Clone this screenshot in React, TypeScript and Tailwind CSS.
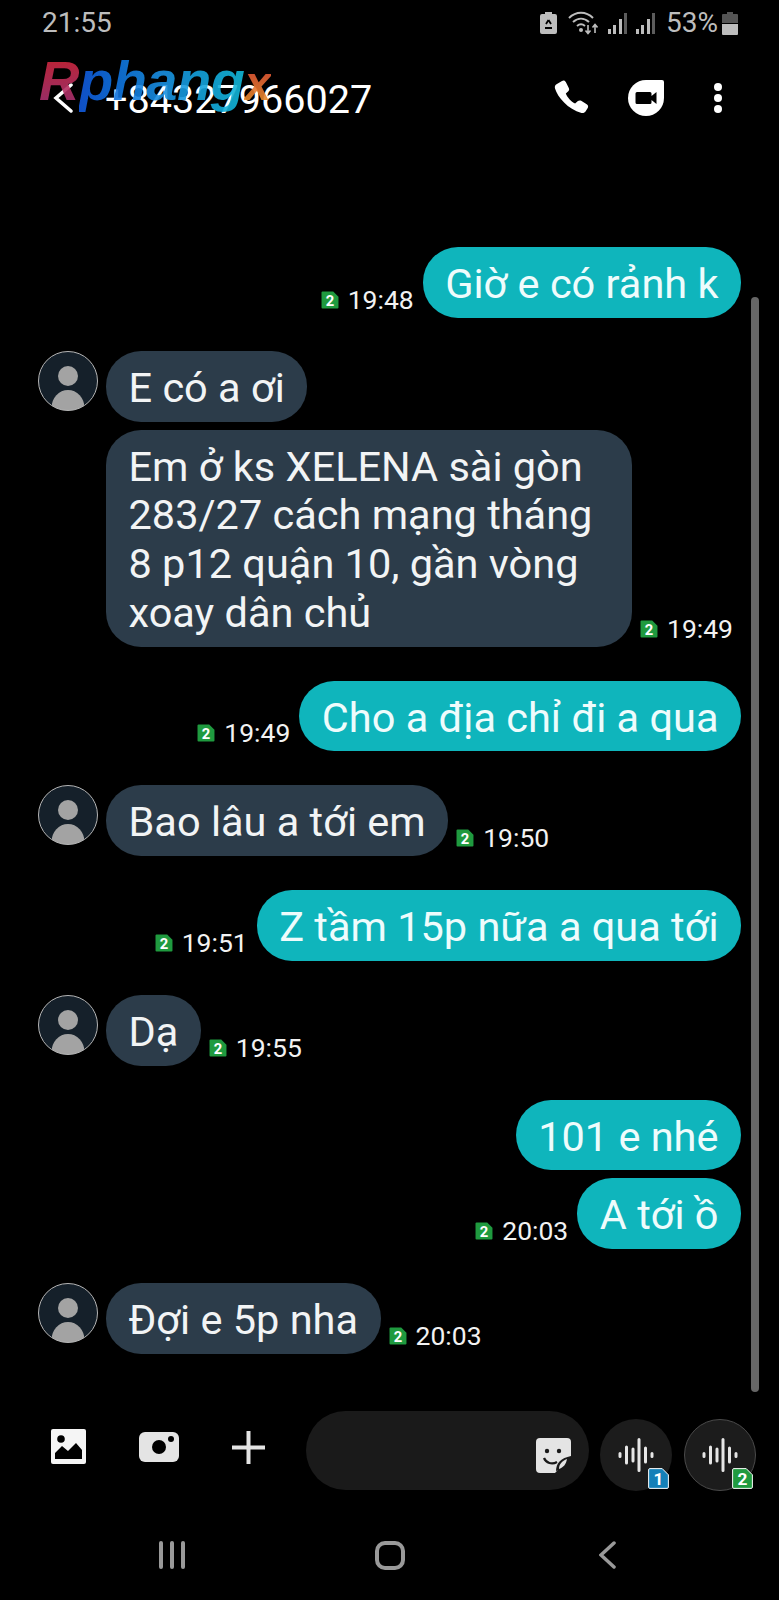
import React from "react";

const SimBadge = ({ n, size = 18, border = false }: { n: 1 | 2; size?: number; border?: boolean }) => {
  const fill = n === 1 ? "#1480b8" : "#1f9a3f";
  return (
    <svg width={size} height={size} viewBox="0.5 0.5 17 17" className="shrink-0">
      <path
        d="M2 1h10l5 5v10a1 1 0 0 1-1 1H2a1 1 0 0 1-1-1V2a1 1 0 0 1 1-1z"
        fill={fill}
        stroke={border ? "#fff" : "none"}
        strokeWidth={border ? 0.8 : 0}
      />
      <text x="9" y="14.500" textAnchor="middle" fontSize="14" fontWeight="700" fill="#fff" fontFamily="Roboto, sans-serif">
        {n}
      </text>
    </svg>
  );
};

const Time = ({ t }: { t: string }) => (
  <div className="flex items-center gap-[9px] mb-[3px] shrink-0 text-[26.5px] leading-[30px] text-[#f2f2f2]">
    <SimBadge n={2} />
    <span>{t}</span>
  </div>
);

const Bubble = ({ text, sent }: { text: string; sent?: boolean }) => (
  <div
    className={`rounded-[35px] px-[22.5px] pt-[13px] pb-[9px] text-[41.5px] leading-[48.75px] ${
      sent ? "bg-[#0fb5bc] text-[#eefcfc]" : "bg-[#2c3c4a] text-[#f2f4f5]"
    }`}
  >
    {text}
  </div>
);

const Sent = ({ text, t, gap = "mt-[34px]" }: { text: string; t?: string; gap?: string }) => (
  <div className={`flex justify-end items-end gap-[9px] pr-[38px] ${gap}`}>
    {t && <Time t={t} />}
    <Bubble text={text} sent />
  </div>
);

const Avatar = () => (
  <svg width="60" height="60" viewBox="0 0 60 60" className="shrink-0">
    <defs>
      <clipPath id="avatarClip">
        <circle cx="30" cy="30" r="29.5" />
      </clipPath>
    </defs>
    <circle cx="30" cy="30" r="29.5" fill="#15202a" />
    <g clipPath="url(#avatarClip)" fill="#a3a3a3">
      <circle cx="30" cy="25" r="10" />
      <ellipse cx="30" cy="57" rx="16.5" ry="18" />
    </g>
    <circle cx="30" cy="30" r="29.5" fill="none" stroke="#b5b5b5" strokeWidth="1" />
  </svg>
);

const Received = ({ items, gap = "mt-[34px]" }: { items: { text: string; t?: string }[]; gap?: string }) => (
  <div className={`flex items-start gap-2 pl-[38px] ${gap}`}>
    <Avatar />
    <div className="flex flex-col gap-2 min-w-0">
      {items.map((m) => (
        <div key={m.text} className="flex items-end gap-2">
          <div className="w-fit max-w-[526px]">
            <Bubble text={m.text} />
          </div>
          {m.t && <Time t={m.t} />}
        </div>
      ))}
    </div>
  </div>
);

const Wave = () => (
  <svg width="36" height="34" viewBox="0 0 36 34" stroke="#e6e6e6" strokeWidth="3" strokeLinecap="round">
    <path d="M2 15.500v3M8.500 9v16M15 11v12M21 1.500v31M27.500 10v14M34 15.500v3" />
  </svg>
);

export default function App() {
  return (
    <div className="relative w-[779px] h-[1600px] bg-black overflow-hidden flex flex-col font-['Roboto',sans-serif] text-white">
      {/* status bar */}
      <div className="h-[46px] shrink-0 flex items-center pl-[42px] pr-[41px] text-[28px] text-[#bdbdbd]">
        <span>21:55</span>
        <div className="ml-auto flex items-center">
          <svg width="17" height="22" viewBox="0 0 17 22">
            <path d="M5 0h7v2h3a2 2 0 0 1 2 2v16a2 2 0 0 1-2 2H2a2 2 0 0 1-2-2V4a2 2 0 0 1 2-2h3z" fill="#bdbdbd" />
            <path d="M8.5 8l-2.5 4M8.5 8l2.500 4M5 16h7" stroke="#000" strokeWidth="1.800" fill="none" />
          </svg>
          <svg width="30" height="24" viewBox="0 0 30 24" className="ml-[11px]" fill="none" stroke="#bdbdbd" strokeWidth="2">
            <path d="M1 7c7-7 17-7 24 0M5 11c5-4.500 11-4.500 16 0M9 15c3-2.500 5-2.500 8 0" />
            <circle cx="13" cy="19" r="2" fill="#bdbdbd" stroke="none" />
            <path d="M20 14v8M17.500 19.500l2.500 3 2.500-3M27 22v-8M24.500 16.500l2.500-3 2.500 3" strokeWidth="1.600" />
          </svg>
          <svg width="20" height="22" viewBox="0 0 20 22" className="ml-[10px]">
            <rect x="0" y="17" width="3" height="5" fill="#bdbdbd" />
            <rect x="5" y="13" width="3" height="9" fill="#bdbdbd" />
            <rect x="11" y="7" width="3" height="15" fill="#bdbdbd" />
            <rect x="16" y="1" width="3" height="21" fill="#5c5c5c" />
          </svg>
          <svg width="20" height="22" viewBox="0 0 20 22" className="ml-2">
            <rect x="0" y="17" width="3" height="5" fill="#bdbdbd" />
            <rect x="5" y="13" width="3" height="9" fill="#bdbdbd" />
            <rect x="11" y="7" width="3" height="15" fill="#bdbdbd" />
            <rect x="16" y="1" width="3" height="21" fill="#5c5c5c" />
          </svg>
          <span className="ml-[10px]">53%</span>
          <svg width="16" height="23" viewBox="0 0 16 23" className="ml-1">
            <path d="M5 0h6v2h4a1 1 0 0 1 1 1v8H0V3a1 1 0 0 1 1-1h4z" fill="#555" />
            <path d="M0 12h16v10a1 1 0 0 1-1 1H1a1 1 0 0 1-1-1z" fill="#bdbdbd" />
          </svg>
        </div>
      </div>

      {/* header */}
      <div className="h-[104px] shrink-0 flex items-center pl-[52px] pr-[57px]">
        <svg width="22" height="30" viewBox="0 0 22 30" fill="none" stroke="#fff" strokeWidth="3.500" strokeLinecap="round">
          <path d="M19 2L4 15l15 13" />
        </svg>
        <span className="ml-[31px] mt-[3px] text-[39.6px] text-white">+84327966027</span>
        <div className="ml-auto flex items-center">
          <svg width="36" height="36" viewBox="0 0 36 36">
            <path
              d="M8 1c1.500-1 3-.5 3.800 1l3 6c.6 1.200.4 2.300-.5 3.300l-2.500 2.300c1.500 3.800 5.200 8 9.300 10l2.800-2.500c1-.8 2.200-.9 3.300-.3l5.500 3.500c1.500 1 1.800 2.500 1 3.800l-2 3.200c-1 1.500-2.500 2-4.200 1.600C14 29.500 3.500 17 1 8.500.5 6.800 1 5.300 2.500 4.300z"
              fill="#fff"
            />
          </svg>
          <svg width="36" height="36" viewBox="0 0 36 36" className="ml-[38px]">
            <path d="M18 0h16a2 2 0 0 1 2 2v16a18 18 0 1 1-18-18z" fill="#fff" />
            <path d="M9 12h13a1.500 1.500 0 0 1 1.500 1.500v2.500l5-4v12l-5-4v2.500A1.500 1.500 0 0 1 22 24H9a1.500 1.500 0 0 1-1.500-1.500v-9A1.500 1.500 0 0 1 9 12z" fill="#000" />
          </svg>
          <div className="ml-[50px] flex flex-col gap-[3px]">
            <div className="w-2 h-2 rounded-full bg-white" />
            <div className="w-2 h-2 rounded-full bg-white" />
            <div className="w-2 h-2 rounded-full bg-white" />
          </div>
        </div>
      </div>

      {/* watermark over the header */}
      <div className="absolute left-[39px] top-[50px] text-[56px] leading-[62px] font-bold italic tracking-[-0.5px] font-['Liberation_Sans',sans-serif] opacity-90 pointer-events-none">
        <span className="bg-gradient-to-b from-[#d81f26] to-[#a0307a] bg-clip-text text-transparent">R</span>
        <span className="bg-gradient-to-r from-[#1258dc] via-[#1a8fe0] to-[#12b8d8] bg-clip-text text-transparent">phang</span>
        <span className="bg-gradient-to-b from-[#dc2f38] to-[#e89a20] bg-clip-text text-transparent text-[48px]">x</span>
      </div>

      {/* messages */}
      <div className="relative flex-1 min-h-0 pt-[97px]">
        <Sent text="Giờ e có rảnh k" t="19:48" gap="mt-0" />
        <Received
          gap="mt-[33px]"
          items={[
            { text: "E có a ơi" },
            { text: "Em ở ks XELENA sài gòn 283/27 cách mạng tháng 8 p12 quận 10, gần vòng xoay dân chủ", t: "19:49" },
          ]}
        />
        <Sent text="Cho a địa chỉ đi a qua" t="19:49" />
        <Received items={[{ text: "Bao lâu a tới em", t: "19:50" }]} />
        <Sent text="Z tầm 15p nữa a qua tới" t="19:51" />
        <Received items={[{ text: "Dạ", t: "19:55" }]} />
        <Sent text="101 e nhé" />
        <Sent text="A tới ồ" t="20:03" gap="mt-2" />
        <Received items={[{ text: "Đợi e 5p nha", t: "20:03" }]} />
        <div className="absolute right-5 top-[147px] w-2 h-[1095px] rounded-full bg-[#666]" />
      </div>

      {/* composer */}
      <div className="h-[110px] shrink-0 flex items-start pl-[51px] pr-[23px]">
        <svg width="35" height="35" viewBox="0 0 35 35" className="mt-[29px]">
          <rect width="35" height="35" rx="2" fill="#f5f5f5" />
          <circle cx="10" cy="10" r="3.800" fill="#000" />
          <path d="M4 30v-6l7-7 6 5 8-8 6 7v9z" fill="#000" />
        </svg>
        <svg width="40" height="30" viewBox="0 0 40 30" className="ml-[53px] mt-[32px]">
          <rect width="40" height="30" rx="6" fill="#e4e4e4" />
          <circle cx="20" cy="15" r="7" fill="#000" />
          <circle cx="32" cy="7" r="3" fill="#000" />
        </svg>
        <svg width="33" height="33" viewBox="0 0 33 33" className="ml-[53px] mt-[31px]">
          <path d="M16.500 0v33M0 16.500h33" stroke="#e4e4e4" strokeWidth="4" />
        </svg>
        <div className="ml-[41px] mt-[11px] w-[283px] h-[79px] rounded-full bg-[#1a1a1a] flex items-center justify-end pr-[18px]">
          <svg width="35" height="35" viewBox="0 0 35 35" className="mt-[9px]">
            <path d="M4 0h27a4 4 0 0 1 4 4v14L19 35H4a4 4 0 0 1-4-4V4a4 4 0 0 1 4-4z" fill="#e4e4e4" />
            <circle cx="11" cy="13" r="2.200" fill="#1a1a1a" />
            <circle cx="23" cy="13" r="2.200" fill="#1a1a1a" />
            <path d="M8 20c2 5 8 7 13 4" stroke="#1a1a1a" strokeWidth="2.200" fill="none" />
            <path d="M20 33c0-8 5-13 15-15-1 8-6 13-15 15z" fill="#1a1a1a" />
            <path d="M23 31c0-5 3-8 8-10-1 5-3 8-8 10z" fill="#e4e4e4" />
          </svg>
        </div>
        <div className="relative ml-[11px] mt-[19px] w-[72px] h-[72px] rounded-full bg-[#1c1c1c] flex items-center justify-center">
          <Wave />
          <div className="absolute right-[3px] bottom-[2px]">
            <SimBadge n={1} size={21} border />
          </div>
        </div>
        <div className="relative ml-3 mt-[19px] w-[72px] h-[72px] rounded-full bg-[#1c1c1c] border border-[#4a4a4a] flex items-center justify-center">
          <Wave />
          <div className="absolute right-[2px] bottom-[1px]">
            <SimBadge n={2} size={21} border />
          </div>
        </div>
      </div>

      {/* nav bar */}
      <div className="h-[90px] shrink-0 relative flex items-start justify-between pl-[159px] pr-[163px] pt-[31px]">
        <div className="flex gap-[7px] h-[28px]">
          <div className="w-1 h-full rounded-sm bg-[#999]" />
          <div className="w-1 h-full rounded-sm bg-[#999]" />
          <div className="w-1 h-full rounded-sm bg-[#999]" />
        </div>
        <div className="w-[30px] h-[29px] mr-[4px] rounded-[10px] border-[4px] border-[#999]" />
        <svg width="17" height="28" viewBox="0 0 17 28" fill="none" stroke="#999" strokeWidth="3.500" strokeLinecap="round">
          <path d="M15 2L2 14l13 12" />
        </svg>
      </div>
    </div>
  );
}
